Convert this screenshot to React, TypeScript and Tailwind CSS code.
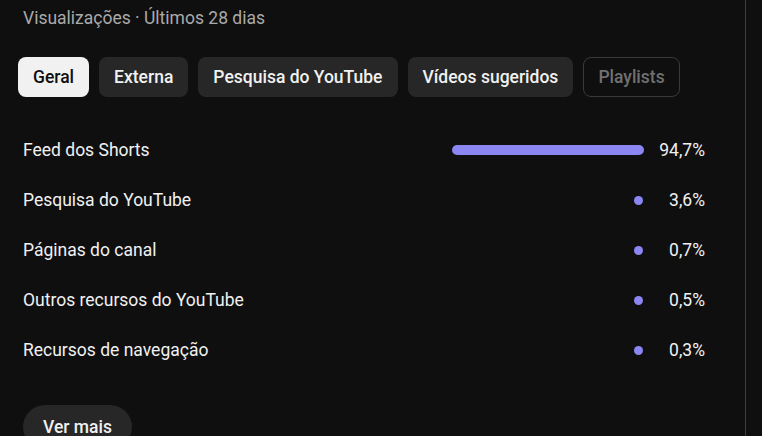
const chips = [
  { label: 'Geral', active: true },
  { label: 'Externa' },
  { label: 'Pesquisa do YouTube' },
  { label: 'Vídeos sugeridos' },
  { label: 'Playlists', disabled: true },
]

const rows = [
  { label: 'Feed dos Shorts', value: '94,7%', pct: 94.7 },
  { label: 'Pesquisa do YouTube', value: '3,6%', pct: 3.6 },
  { label: 'Páginas do canal', value: '0,7%', pct: 0.7 },
  { label: 'Outros recursos do YouTube', value: '0,5%', pct: 0.5 },
  { label: 'Recursos de navegação', value: '0,3%', pct: 0.3 },
]

export default function App() {
  return (
    <div
      className="w-[762px] h-[436px] overflow-hidden bg-[#0f0f0f] flex"
      style={{ fontFamily: 'Roboto, "Noto Sans", sans-serif' }}
    >
      <div className="w-[746px] shrink-0 border-r border-[#3e3e3e] pl-[18px] pt-[5px]">
        <div className="pl-[5px] text-[17.5px] leading-[26px] text-[#aaaaaa]">
          Visualizações · Últimos 28 dias
        </div>

        <div className="flex gap-[10px] mt-[26px]">
          {chips.map(c => (
            <button
              key={c.label}
              className={`h-[40px] rounded-[8px] text-[17.5px] font-medium ${
                c.active
                  ? 'px-[15px] bg-[#f1f1f1] text-[#0f0f0f]'
                  : c.disabled
                  ? 'px-[14px] border border-[#3a3a3a] text-[#717171]'
                  : 'px-[15px] bg-[#272727] text-[#f1f1f1]'
              }`}
            >
              {c.label}
            </button>
          ))}
        </div>

        <div className="mt-[28px] pl-[5px] w-[687px]">
          {rows.map(r => (
            <div key={r.label} className="flex items-center h-[50px] text-[17.5px] text-[#f1f1f1]">
              <div className="flex-1">{r.label}</div>
              <div className="w-[192px] flex justify-end">
                {r.pct > 50 ? (
                  <div className="h-[10px] w-[192px] rounded-full bg-[#8b86f2]" />
                ) : (
                  <div className="w-[9px] h-[9px] mr-[1px] rounded-full bg-[#8b86f2]" />
                )}
              </div>
              <div className="w-[61px] text-right">{r.value}</div>
            </div>
          ))}
        </div>

        <button className="mt-[30px] ml-[5px] h-[44px] px-[20px] rounded-full bg-[#272727] text-[#f1f1f1] text-[17.5px] font-medium">
          Ver mais
        </button>
      </div>
    </div>
  )
}
